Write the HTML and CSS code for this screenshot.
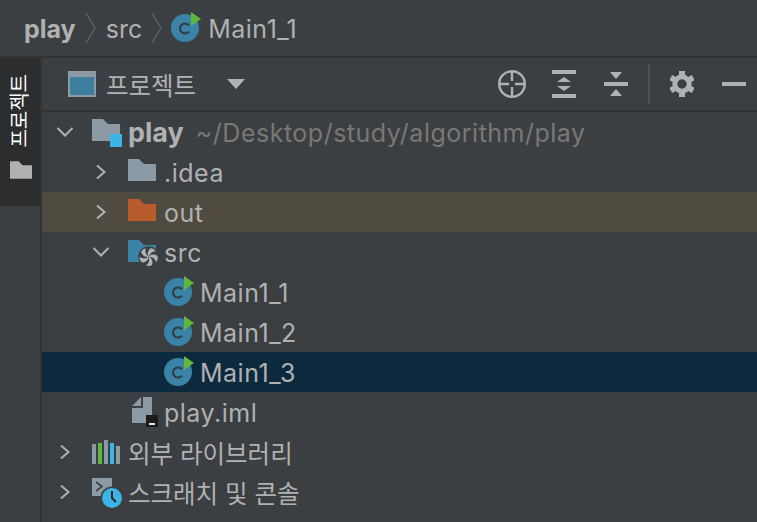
FILE: index.html
```html
<!DOCTYPE html>
<html lang="ko">
<head>
  <meta charset="UTF-8" />
  <title>play - Main1_1</title>
  <link rel="stylesheet" href="styles.css">
</head>
<body>
  <svg class="defs" width="0" height="0">
    <symbol id="icon-class" viewBox="0 0 32 32">
      <circle cx="14" cy="16" r="14" fill="#3a83a6" />
      <path d="M18 13.500a5 5 0 1 0 0 6" fill="none" stroke="#2f3a42" stroke-width="2" />
      <path d="M20 0 30 7 20 14z" fill="#5fb83c" />
    </symbol>
    <symbol id="icon-folder" viewBox="0 0 28 22">
      <path d="M0 0h11l5 5h12v17H0z" fill="currentColor" />
    </symbol>
    <symbol id="icon-chev-right" viewBox="0 0 12 16">
      <path d="M2 1.500 9.500 8 2 14.500" fill="none" stroke="#afb1b3" stroke-width="2" />
    </symbol>
    <symbol id="icon-chev-down" viewBox="0 0 18 12">
      <path d="M1.500 2 9 9.500 16.500 2" fill="none" stroke="#afb1b3" stroke-width="2" />
    </symbol>
    <path id="swirl-blade" d="M0 0C-2-3-1-7 2-9.500 5-9.500 7-8 8-6 4-6 1.500-4 0 0z" fill="#afb1b3" />
    <rect id="gear-tooth" x="9" y="0" width="6" height="6" fill="#afb1b3" />
  </svg>

  <div class="breadcrumb">
    <span class="crumb-bold">play</span>
    <svg class="crumb-sep" viewBox="0 0 12 32" width="12" height="32"><path d="M1 1 10 16 1 31" fill="none" stroke="#5d6063" stroke-width="1.400" /></svg>
    <span class="crumb-src">src</span>
    <svg class="crumb-sep" viewBox="0 0 12 32" width="12" height="32"><path d="M1 1 10 16 1 31" fill="none" stroke="#5d6063" stroke-width="1.400" /></svg>
    <svg class="icon-class" width="32" height="32"><use href="#icon-class" /></svg>
    <span class="crumb-file">Main1_1</span>
  </div>

  <div class="main">
    <aside class="stripe">
      <div class="stripe-tab">
        <span class="stripe-label">프로젝트</span>
        <svg class="stripe-folder" width="22" height="18"><use href="#icon-folder" /></svg>
      </div>
    </aside>

    <section class="panel">
      <header class="panel-head">
        <svg class="view-icon" viewBox="0 0 28 26" width="28" height="26">
          <rect x="1" y="1" width="26" height="24" fill="#3e7f9e" stroke="#8c9aa5" stroke-width="2" />
          <rect x="2" y="2" width="24" height="4" fill="#8c9aa5" />
        </svg>
        <span class="panel-title">프로젝트</span>
        <svg class="caret" viewBox="0 0 18 10" width="18" height="10"><path d="M0 0h18L9 10z" fill="#afb1b3" /></svg>

        <div class="tools">
          <svg viewBox="0 0 28 28" width="28" height="28" class="tool-target">
            <circle cx="14" cy="14" r="12.800" fill="none" stroke="#afb1b3" stroke-width="2.400" />
            <path d="M14 2v9M14 17v9M2 14h9M17 14h9" stroke="#afb1b3" stroke-width="2.400" />
          </svg>
          <svg viewBox="0 0 24 28" width="24" height="28" class="tool-expand">
            <path d="M0 0h24v4H0zM0 24h24v4H0zM12 7l7 5H5zM12 21l-7-5h14z" fill="#afb1b3" />
          </svg>
          <svg viewBox="0 0 24 28" width="24" height="28" class="tool-collapse">
            <path d="M0 12h24v4H0zM6 2h12l-6 7zM12 19l6 7H6z" fill="#afb1b3" />
          </svg>
          <span class="tool-divider"></span>
          <svg viewBox="0 0 24 26" width="24" height="26" class="tool-gear">
            <circle cx="12" cy="13" r="7.200" fill="none" stroke="#afb1b3" stroke-width="5" />
            <use href="#gear-tooth" />
            <use href="#gear-tooth" transform="rotate(60 12 13)" />
            <use href="#gear-tooth" transform="rotate(120 12 13)" />
            <use href="#gear-tooth" transform="rotate(180 12 13)" />
            <use href="#gear-tooth" transform="rotate(240 12 13)" />
            <use href="#gear-tooth" transform="rotate(300 12 13)" />
          </svg>
          <span class="tool-minus"></span>
        </div>
      </header>

      <ul class="tree">
        <li class="row depth-0">
          <span class="chev-slot"><svg width="18" height="12"><use href="#icon-chev-down" /></svg></span>
          <span class="icon-slot">
            <svg viewBox="0 0 30 30" width="30" height="30">
              <path d="M0 2h11l5 5h12v17H0z" fill="#8c9aa5" />
              <rect x="18" y="17" width="12" height="13" fill="#3db3e6" />
            </svg>
          </span>
          <span class="bold">play</span>
          <span class="label dim">~/Desktop/study/algorithm/play</span>
        </li>
        <li class="row depth-1">
          <span class="chev-slot"><svg width="12" height="16"><use href="#icon-chev-right" /></svg></span>
          <span class="icon-slot folder-grey"><svg width="28" height="22"><use href="#icon-folder" /></svg></span>
          <span class="label">.idea</span>
        </li>
        <li class="row depth-1 row-excluded">
          <span class="chev-slot"><svg width="12" height="16"><use href="#icon-chev-right" /></svg></span>
          <span class="icon-slot folder-orange"><svg width="28" height="22"><use href="#icon-folder" /></svg></span>
          <span class="label">out</span>
        </li>
        <li class="row depth-1">
          <span class="chev-slot"><svg width="18" height="12"><use href="#icon-chev-down" /></svg></span>
          <span class="icon-slot">
            <svg viewBox="0 0 30 30" width="30" height="30">
              <path d="M0 3h11l5 5h12v17H0z" fill="#3a83a6" />
              <circle cx="20.700" cy="19.700" r="10.500" fill="#3c3f41" />
              <g transform="translate(20.700 19.700) scale(0.900)">
                <use href="#swirl-blade" />
                <use href="#swirl-blade" transform="rotate(72)" />
                <use href="#swirl-blade" transform="rotate(144)" />
                <use href="#swirl-blade" transform="rotate(216)" />
                <use href="#swirl-blade" transform="rotate(288)" />
              </g>
            </svg>
          </span>
          <span class="label">src</span>
        </li>
        <li class="row depth-2">
          <span class="icon-slot"><svg width="32" height="32"><use href="#icon-class" /></svg></span>
          <span class="label">Main1_1</span>
        </li>
        <li class="row depth-2">
          <span class="icon-slot"><svg width="32" height="32"><use href="#icon-class" /></svg></span>
          <span class="label">Main1_2</span>
        </li>
        <li class="row depth-2 row-selected">
          <span class="icon-slot"><svg width="32" height="32"><use href="#icon-class" /></svg></span>
          <span class="label">Main1_3</span>
        </li>
        <li class="row depth-iml">
          <span class="icon-slot-wide">
            <svg viewBox="0 0 26 30" width="26" height="30">
              <path d="M0 9 9 0v9zM11 0h9v18h-6v8H0V11h11z" fill="#8c9aa5" />
              <rect x="14" y="18" width="12" height="12" fill="#1c1c1c" />
              <rect x="17" y="26" width="6" height="2" fill="#e8e8e8" />
            </svg>
          </span>
          <span class="label">play.iml</span>
        </li>
        <li class="row depth-0">
          <span class="chev-slot"><svg width="12" height="16"><use href="#icon-chev-right" /></svg></span>
          <span class="icon-slot">
            <svg viewBox="0 0 28 24" width="28" height="24">
              <rect x="0" y="4" width="4" height="20" fill="#8c9aa5" />
              <rect x="6" y="3" width="4" height="21" fill="#5fb83c" />
              <rect x="12" y="0" width="4" height="24" fill="#8c9aa5" />
              <rect x="18" y="3" width="4" height="21" fill="#3db3e6" />
              <rect x="24" y="6" width="4" height="18" fill="#8c9aa5" />
            </svg>
          </span>
          <span class="ko">외부 라이브러리</span>
        </li>
        <li class="row depth-0">
          <span class="chev-slot"><svg width="12" height="16"><use href="#icon-chev-right" /></svg></span>
          <span class="icon-slot">
            <svg viewBox="0 0 30 32" width="30" height="32">
              <rect x="0" y="2" width="20" height="18" fill="#8c9aa5" />
              <path d="M4 6l6 4.500-6 4.500" fill="none" stroke="#3c3f41" stroke-width="1.600" />
              <circle cx="20" cy="22" r="11.500" fill="#3c3f41" />
              <circle cx="20" cy="22" r="10" fill="#3db3e6" />
              <path d="M20 15v7l4 4" fill="none" stroke="#26282a" stroke-width="2" />
            </svg>
          </span>
          <span class="ko">스크래치 및 콘솔</span>
        </li>
      </ul>
    </section>
  </div>
</body>
</html>
```

FILE: styles.css
```css
* {
  box-sizing: border-box;
}

html, body {
  margin: 0;
  padding: 0;
}

body {
  width: 757px;
  height: 522px;
  overflow: hidden;
  background-color: #3c3f41;
  color: #afb1b3;
  font-family: Inter, "Noto Sans CJK KR", sans-serif;
  font-size: 25px;
  letter-spacing: 0.5px;
}

.defs {
  position: absolute;
}

.breadcrumb {
  display: flex;
  align-items: center;
  height: 58px;
  padding-left: 24px;
  border-bottom: 2px solid #303234;
}

.crumb-bold {
  margin-top: 2px;
  font-weight: 700;
  letter-spacing: 0;
}

.crumb-src {
  margin-top: 2px;
  letter-spacing: 0;
}

.crumb-file {
  margin-top: 2px;
}

.crumb-sep {
  margin: 0 9px;
}

.icon-class {
  margin: 0 5px 0 -1px;
}

.main {
  display: flex;
  height: 464px;
}

.stripe {
  width: 42px;
  border-right: 2px solid #303234;
}

.stripe-tab {
  display: flex;
  flex-direction: column;
  align-items: center;
  height: 148px;
  padding-top: 16px;
  background-color: #2b2d2f;
}

.stripe-label {
  writing-mode: vertical-rl;
  text-orientation: sideways;
  transform: rotate(180deg);
  color: #ffffff;
  font-size: 20px;
  line-height: 22px;
  letter-spacing: 0;
}

.stripe-folder {
  margin: 13px 0 0 2px;
  color: #afb1b3;
}

.panel {
  flex: 1;
  min-width: 0;
}

.panel-head {
  display: flex;
  align-items: center;
  height: 54px;
  padding-left: 26px;
  border-bottom: 2px solid #303234;
}

.panel-title {
  margin-left: 10px;
  font-size: 24.500px;
  letter-spacing: 0;
}

.caret {
  margin-left: 31px;
}

.tools {
  display: flex;
  align-items: center;
  margin-left: auto;
  padding-right: 11px;
}

.tool-target {
  margin-right: 26px;
}

.tool-expand {
  margin-right: 28px;
}

.tool-collapse {
  margin-right: 20px;
}

.tool-divider {
  width: 2px;
  height: 40px;
  margin-right: 20px;
  background-color: #505254;
}

.tool-gear {
  margin-right: 28px;
}

.tool-minus {
  width: 24px;
  height: 4px;
  background-color: #afb1b3;
}

.tree {
  margin: 0;
  padding: 0;
  list-style: none;
}

.row {
  display: flex;
  align-items: center;
  height: 40px;
}

.row-excluded {
  background-color: #4f4b41;
}

.row-selected {
  background-color: #0d293e;
}

.chev-slot {
  display: flex;
  flex: none;
  justify-content: center;
  width: 38px;
  margin-right: 8px;
}

.icon-slot {
  display: flex;
  flex: none;
  width: 36px;
}

.icon-slot-wide {
  display: flex;
  flex: none;
  width: 32px;
}

.depth-0 {
  padding-left: 4px;
}

.depth-1 {
  padding-left: 40px;
}

.depth-2 {
  padding-left: 122px;
}

.depth-iml {
  padding-left: 90px;
}

.folder-grey {
  margin-top: -4px;
  color: #8c9aa5;
}

.folder-orange {
  margin-top: -4px;
  color: #b85c2c;
}

.label {
  margin-top: 2px;
}

.bold {
  font-size: 27px;
  font-weight: 700;
  letter-spacing: 0;
}

.dim {
  margin-left: 12px;
  color: #787878;
}

.ko {
  font-size: 24.500px;
  letter-spacing: 0;
}
```
